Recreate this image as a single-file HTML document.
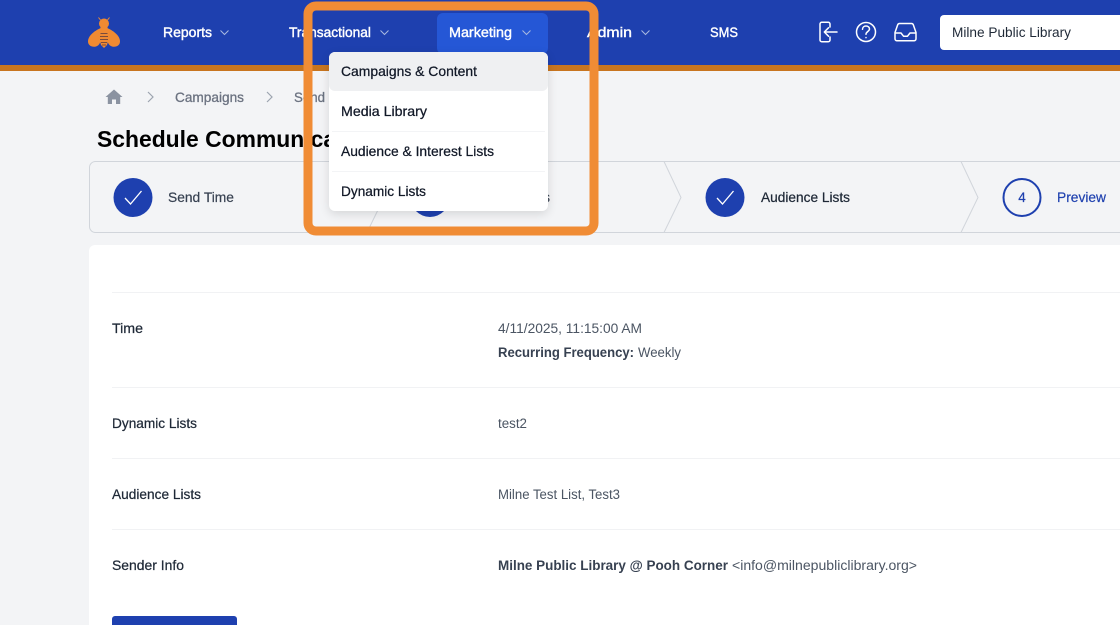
<!DOCTYPE html>
<html><head><meta charset="utf-8">
<style>
html,body{margin:0;padding:0;width:1120px;height:625px;overflow:hidden;background:#f3f4f6}
svg{display:block;filter:blur(.3px)}
text{font-family:"Liberation Sans",sans-serif;font-size:13px}
.n{fill:#fff;font-size:14px;stroke:#fff;stroke-width:.4px}
.m{fill:#111827;font-size:14px;stroke:#111827;stroke-width:.25px}
.l{fill:#1f2937;font-size:14px;stroke:#1f2937;stroke-width:.25px}
.v{fill:#4b5563;font-size:13.5px}
.b{fill:#374151;font-weight:700;font-size:13.5px}
</style></head><body>
<svg width="1120" height="625" viewBox="0 0 1120 625" xmlns="http://www.w3.org/2000/svg">
<rect width="1120" height="625" fill="#f3f4f6"/>
<!-- header -->
<rect width="1120" height="65" fill="#1e40af"/>
<rect y="65" width="1120" height="6" fill="#c8751f"/>
<!-- bee -->
<g fill="#f08a32">
<path d="M101 28C96 30 88 35 88 41.500C88 45.500 92 47.500 96 46.500C100 45.500 101.500 40 101.500 34Z"/>
<path d="M107 28C112 30 120 35 120 41.500C120 45.500 116 47.500 112 46.500C108 45.500 106.500 40 106.500 34Z"/>
<circle cx="104" cy="23.500" r="5"/>
<path d="M100.500 27h7l1 13-1.500 5-3 3-3-3-1.500-5z"/>
</g>
<path d="M100.500 20l-2-2.500M107.500 20l2-2.500" stroke="#f08a32" stroke-width="1" fill="none"/>
<g stroke="#7a4b3c" stroke-width="1.100"><path d="M100.500 33.500h7M100 36.500h8M100 39.500h8M101 42.500h6M102 45h4"/></g>
<!-- nav -->
<text class="n" x="163" y="37" textLength="49" lengthAdjust="spacingAndGlyphs">Reports</text>
<path d="M220.500 30.500l4 4 4-4" fill="none" stroke="#a8b8e0" stroke-width="1"/>
<text class="n" x="289" y="37" textLength="82" lengthAdjust="spacingAndGlyphs">Transactional</text>
<path d="M380.500 30.500l4 4 4-4" fill="none" stroke="#a8b8e0" stroke-width="1"/>
<rect x="437" y="13" width="111" height="41" rx="6" fill="#2557d6"/>
<text class="n" x="449" y="37" textLength="63" lengthAdjust="spacingAndGlyphs">Marketing</text>
<path d="M522.500 30.500l4 4 4-4" fill="none" stroke="#a8b8e0" stroke-width="1"/>
<text class="n" x="587" y="37" textLength="45" lengthAdjust="spacingAndGlyphs">Admin</text>
<path d="M641.500 30.500l4 4 4-4" fill="none" stroke="#a8b8e0" stroke-width="1"/>
<text class="n" x="710" y="37" textLength="28" lengthAdjust="spacingAndGlyphs">SMS</text>
<!-- header icons -->
<g fill="none" stroke="#fff" stroke-width="1.500" stroke-linecap="round" stroke-linejoin="round">
<path d="M830 27v-3a1.800 1.800 0 0 0-1.800-1.800h-6.400a1.800 1.800 0 0 0-1.800 1.800v16a1.800 1.800 0 0 0 1.800 1.800h6.400a1.800 1.800 0 0 0 1.800-1.800v-3"/>
<path d="M837 32h-12.500M828.500 27.800l-4.200 4.200 4.200 4.200"/>
<circle cx="866" cy="32" r="9.500"/>
<path d="M862.500 29.300c0-2 1.600-3.300 3.500-3.300s3.500 1.300 3.500 3c0 2.300-3.500 2.700-3.500 5.200M866 37.500v.1"/>
<path d="M899.500 23.500h12a2 2 0 0 1 1.800 1.300l2.700 7.700v6.300a2 2 0 0 1-2 2h-17a2 2 0 0 1-2-2v-6.300l2.700-7.700a2 2 0 0 1 1.800-1.300z"/>
<path d="M895.500 33h5.500l2.500 3.200h4l2.500-3.200h5.500"/>
</g>
<rect x="940" y="15" width="200" height="35" rx="4" fill="#fff"/>
<text x="952" y="37" fill="#1f2937" style="font-size:14px" textLength="119" lengthAdjust="spacingAndGlyphs">Milne Public Library</text>
<!-- breadcrumb -->
<path d="M114 89.500l-8.500 7.500h2.300v7h4.200v-4.500h4v4.500h4.200v-7h2.300z" fill="#8b93a1"/>
<path d="M148 92l5 5-5 5M267 92l5 5-5 5" fill="none" stroke="#9ca3af" stroke-width="1.200"/>
<text x="175" y="102" fill="#6b7280" style="font-size:14px;stroke:#6b7280;stroke-width:.3px" textLength="69" lengthAdjust="spacingAndGlyphs">Campaigns</text>
<text x="294" y="102" fill="#6b7280" style="font-size:14px;stroke:#6b7280;stroke-width:.3px" textLength="31" lengthAdjust="spacingAndGlyphs">Send</text>
<text x="97" y="147" fill="#000" style="font-size:23px;font-weight:700" textLength="281" lengthAdjust="spacingAndGlyphs">Schedule Communication</text>
<!-- stepper -->
<rect x="89.500" y="161.500" width="1060" height="71" rx="6" fill="#f3f4f6" stroke="#d1d5db"/>
<g fill="none" stroke="#d1d5db">
<path d="M367 161.500l17 36-17 35"/>
<path d="M664 161.500l17 36-17 35"/>
<path d="M961 161.500l17 36-17 35"/>
</g>
<circle cx="133" cy="197.500" r="19.500" fill="#1e40af"/>
<path d="M125 198l5.500 6 11-13" fill="none" stroke="#fff" stroke-width="1.300"/>
<text x="168" y="202" fill="#374151" style="font-size:14px;stroke:#374151;stroke-width:.2px" textLength="66" lengthAdjust="spacingAndGlyphs">Send Time</text>
<circle cx="430" cy="197.500" r="19.500" fill="#1e40af"/>
<text x="466" y="202" fill="#374151" style="font-size:14px;stroke:#374151;stroke-width:.2px" textLength="84" lengthAdjust="spacingAndGlyphs">Dynamic Lists</text>
<circle cx="725" cy="197.500" r="19.500" fill="#1e40af"/>
<path d="M717 198l5.500 6 11-13" fill="none" stroke="#fff" stroke-width="1.300"/>
<text x="761" y="202" fill="#1f2937" style="font-size:14px;stroke:#1f2937;stroke-width:.25px" textLength="89" lengthAdjust="spacingAndGlyphs">Audience Lists</text>
<circle cx="1022" cy="197.500" r="18.500" fill="none" stroke="#1e40af" stroke-width="2"/>
<text x="1022" y="202" text-anchor="middle" fill="#1e40af" style="font-size:13.500px;stroke:#1e40af;stroke-width:.2px">4</text>
<text x="1057" y="202" fill="#1e40af" style="font-size:14px;stroke:#1e40af;stroke-width:.2px" textLength="49" lengthAdjust="spacingAndGlyphs">Preview</text>
<!-- card -->
<rect x="89" y="245" width="1060" height="400" rx="6" fill="#fff"/>
<g fill="#f1f2f4">
<rect x="112" y="292" width="1010" height="1"/>
<rect x="112" y="387" width="1010" height="1"/>
<rect x="112" y="458" width="1010" height="1"/>
<rect x="112" y="529" width="1010" height="1"/>
</g>
<text class="l" x="112" y="333" textLength="31" lengthAdjust="spacingAndGlyphs">Time</text>
<text class="l" x="112" y="428" textLength="85" lengthAdjust="spacingAndGlyphs">Dynamic Lists</text>
<text class="l" x="112" y="499" textLength="89" lengthAdjust="spacingAndGlyphs">Audience Lists</text>
<text class="l" x="112" y="570" textLength="72" lengthAdjust="spacingAndGlyphs">Sender Info</text>
<text class="v" x="498" y="333" textLength="144" lengthAdjust="spacingAndGlyphs">4/11/2025, 11:15:00 AM</text>
<text class="b" x="498" y="357" textLength="136" lengthAdjust="spacingAndGlyphs">Recurring Frequency:</text>
<text class="v" x="638" y="357" textLength="43" lengthAdjust="spacingAndGlyphs">Weekly</text>
<text class="v" x="498" y="428" textLength="29" lengthAdjust="spacingAndGlyphs">test2</text>
<text class="v" x="498" y="499" textLength="122" lengthAdjust="spacingAndGlyphs">Milne Test List, Test3</text>
<text class="b" x="498" y="570" textLength="230" lengthAdjust="spacingAndGlyphs">Milne Public Library @ Pooh Corner</text>
<text class="v" x="732" y="570" textLength="185" lengthAdjust="spacingAndGlyphs">&lt;info@milnepubliclibrary.org&gt;</text>
<rect x="112" y="616" width="125" height="20" rx="3" fill="#1e40af"/>
<!-- orange frame -->
<rect x="308" y="6" width="286" height="225" rx="8" fill="none" stroke="#f08c35" stroke-width="9"/>
<!-- dropdown -->
<rect x="329" y="52" width="219" height="159" rx="6" fill="#000" opacity=".12" transform="translate(0 3)" style="filter:blur(5px)"/>
<rect x="329" y="52" width="219" height="159" rx="6" fill="#fff"/>
<path d="M329 58a6 6 0 0 1 6-6h207a6 6 0 0 1 6 6v27a6 6 0 0 1-6 6H335a6 6 0 0 1-6-6z" fill="#eff0f2"/>
<g fill="#f3f4f6">
<rect x="332" y="131" width="213" height="1"/>
<rect x="332" y="171" width="213" height="1"/>
</g>
<text class="m" x="341" y="76" textLength="136" lengthAdjust="spacingAndGlyphs">Campaigns &amp; Content</text>
<text class="m" x="341" y="116" textLength="86" lengthAdjust="spacingAndGlyphs">Media Library</text>
<text class="m" x="341" y="156" textLength="153" lengthAdjust="spacingAndGlyphs">Audience &amp; Interest Lists</text>
<text class="m" x="341" y="196" textLength="85" lengthAdjust="spacingAndGlyphs">Dynamic Lists</text>
</svg>
</body></html>
